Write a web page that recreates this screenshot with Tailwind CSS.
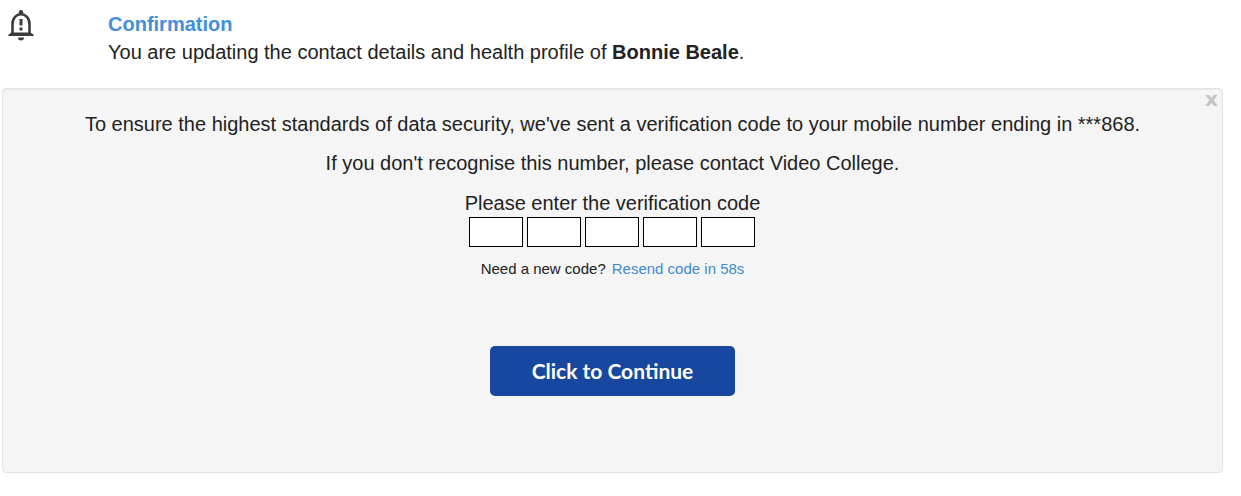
<!DOCTYPE html>
<html lang="en">
<head>
    <meta charset="UTF-8">
    <meta name="viewport" content="width=device-width, initial-scale=1.0">
    <title>Confirmation</title>
    <script src="https://cdn.jsdelivr.net/npm/@tailwindcss/browser@4"></script>
</head>
<body class="bg-white text-[#222] text-[20px] leading-7 font-['Liberation_Sans',Arial,sans-serif]">
    <!-- Header -->
    <header class="flex pt-[10px] pl-2">
        <svg class="w-[26px] h-[31px] shrink-0" viewBox="0 0 26 31" fill="none" stroke="#3c3c3c" aria-hidden="true">
            <path d="M4.5 24V14C4.500 8 8.500 4.300 13 4.300S21.500 8 21.500 14V24" stroke-width="2.600"/>
            <path d="M0.500 26V24.500L3.500 22.500H22.500L25.500 24.500V26Z" fill="#3c3c3c" stroke="none"/>
            <path d="M10.800 4.500V2.200a2.200 2.200 0 0 1 4.400 0V4.500z" fill="#3c3c3c" stroke="none"/>
            <path d="M13 9v6.500M13 17.500v3" stroke-width="3"/>
            <path d="M10 27.500h6a3 3 0 0 1-6 0z" fill="#3c3c3c" stroke="none"/>
        </svg>
        <div class="ml-[74px]">
            <h1 class="font-bold text-[#428fdc]">Confirmation</h1>
            <p>You are updating the contact details and health profile of <strong>Bonnie Beale</strong>.</p>
        </div>
    </header>

    <!-- Verification panel -->
    <main class="relative mt-[22px] ml-[2px] mr-[18px] pt-[21px] pb-[76px] flex flex-col items-center text-center bg-[#f5f5f5] border border-[#e3e3e3] rounded inset-shadow-2xs">
        <button type="button" aria-label="Close" class="absolute top-0 right-1 font-['DejaVu_Sans',sans-serif] font-bold leading-5 text-[#c3c3c3]">x</button>
        <p>To ensure the highest standards of data security, we've sent a verification code to your mobile number ending in ***868.</p>
        <p class="mt-[11px]">If you don't recognise this number, please contact Video College.</p>
        <form class="mt-3 flex flex-col items-center">
            <label for="code1">Please enter the verification code</label>
            <div class="flex gap-1">
                <input id="code1" type="text" maxlength="1" class="w-[54px] h-[30px] bg-white border border-black text-center">
                <input type="text" maxlength="1" aria-label="Digit 2" class="w-[54px] h-[30px] bg-white border border-black text-center">
                <input type="text" maxlength="1" aria-label="Digit 3" class="w-[54px] h-[30px] bg-white border border-black text-center">
                <input type="text" maxlength="1" aria-label="Digit 4" class="w-[54px] h-[30px] bg-white border border-black text-center">
                <input type="text" maxlength="1" aria-label="Digit 5" class="w-[54px] h-[30px] bg-white border border-black text-center">
            </div>
            <p class="mt-3 flex gap-1.5 text-[15px] leading-5">Need a new code? <a href="#" class="text-[#428bca]">Resend code in 58s</a></p>
            <button type="submit" class="mt-[67px] w-[245px] h-[50px] rounded-[5px] bg-[#17479e] text-white font-['Lato',sans-serif] text-[21px] font-bold">Click to Continue</button>
        </form>
    </main>
</body>
</html>
